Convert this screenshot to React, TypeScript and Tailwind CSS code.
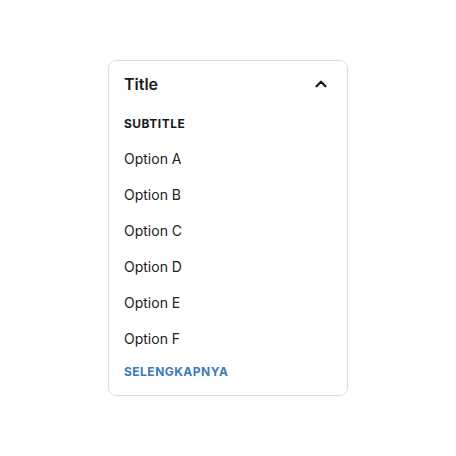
import { ChevronUp } from 'lucide-react'

const options = ['Option A', 'Option B', 'Option C', 'Option D', 'Option E', 'Option F']

export default function App() {
  return (
    <div className="min-h-[456px] w-full bg-white flex items-center justify-center" style={{ fontFamily: 'Inter, "Noto Sans", sans-serif' }}>
      <div className="w-[240px] h-[336px] rounded-lg border border-[#dcdcdc] bg-white flex flex-col">
        {/* Header */}
        <div className="h-[46px] flex items-center justify-between pl-[15px] pr-[17px]">
          <span className="text-[16px] font-semibold text-[#1a1a1a]">Title</span>
          <ChevronUp className="w-[18px] h-[18px] text-[#1a1a1a]" strokeWidth={3} />
        </div>

        <div className="h-[33px] flex items-center pl-[15px]">
          <span className="text-[12px] font-bold tracking-[0.04em] text-[#1a1a1a]">SUBTITLE</span>
        </div>

        {options.map((opt) => (
          <div key={opt} className="h-[36px] flex items-center pl-[15px]">
            <span className="text-[14px] text-[#222]">{opt}</span>
          </div>
        ))}

        <div className="h-[32px] flex items-center pl-[15px]">
          <span className="text-[12px] font-bold tracking-[0.04em] text-[#3d7bb8]">SELENGKAPNYA</span>
        </div>
      </div>
    </div>
  )
}
